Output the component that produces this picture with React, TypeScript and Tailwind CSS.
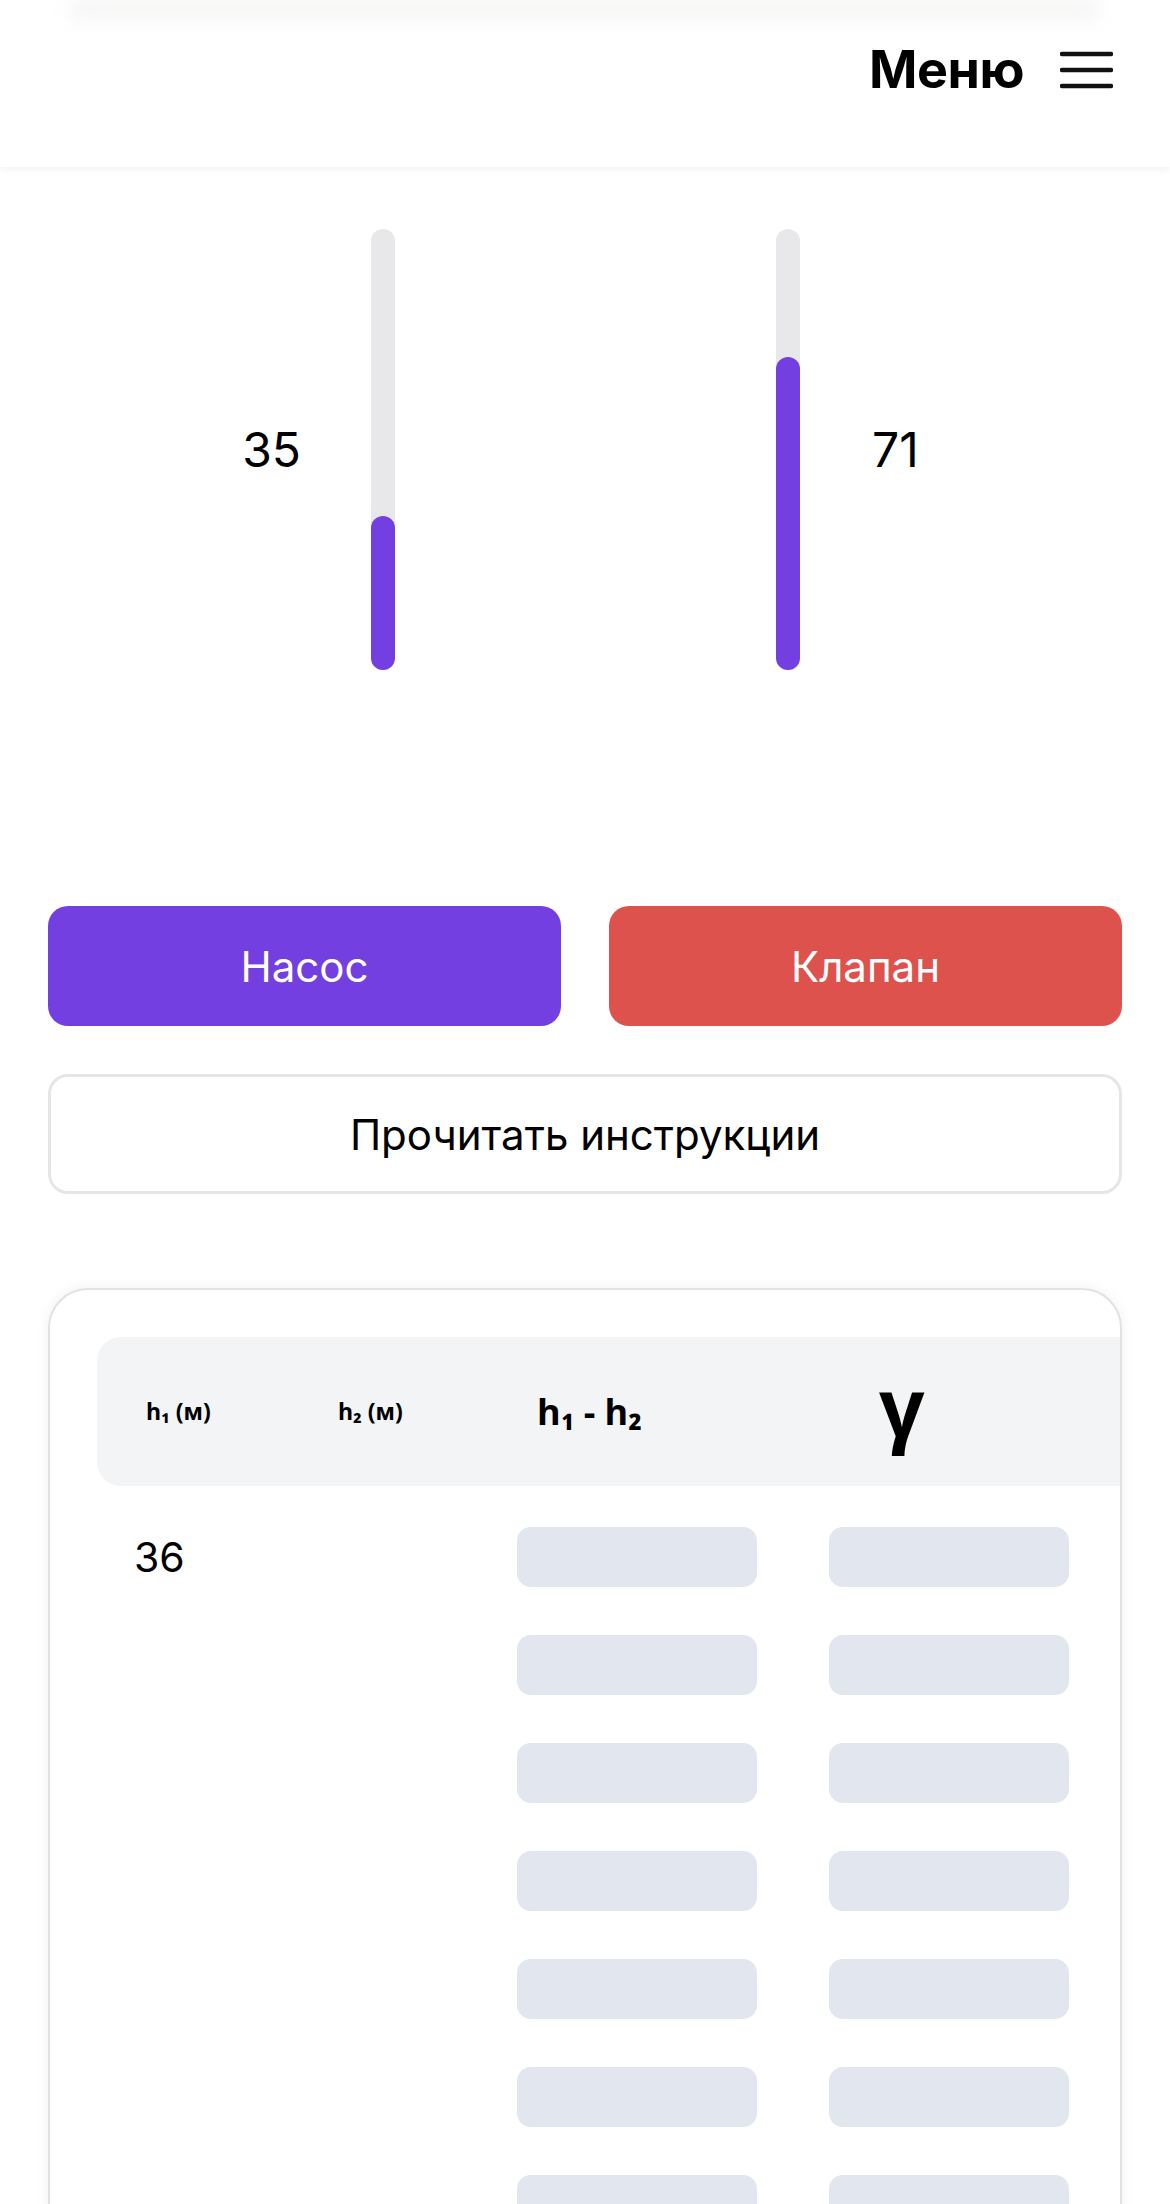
import React from "react";

const rows = Array.from({ length: 9 }, (_, i) => i);

function Track({ value }: { value: number }) {
  return (
    <div className="relative flex h-[441px] w-[24px] flex-col justify-end rounded-full bg-[#e8e8ea]">
      <div className="w-full rounded-full bg-[#743fe0]" style={{ height: `${value}%` }} />
    </div>
  );
}

export default function App() {
  return (
    <div className="min-h-[2204px] overflow-hidden bg-white font-['Inter',sans-serif] text-black">
      <header className="relative h-[167px] bg-white shadow-[0_3px_8px_rgba(0,0,0,0.05)]">
        <div className="mx-[70px] h-[26px] bg-linear-to-b from-[#f1efee] to-white blur-[10px]" />
        <div className="-mt-[26px] flex h-[140px] items-center justify-end pr-[57px]">
          <span className="text-[52px] leading-none font-bold tracking-[-0.5px]">Меню</span>
          <svg width="53" height="38" viewBox="0 0 53 38" className="ml-[36px]">
            <path d="M2 3 H51 M2 19 H51 M2 35 H51" stroke="#111" strokeWidth="4.5" strokeLinecap="round" />
          </svg>
        </div>
      </header>

      <section className="mt-[62px] grid grid-cols-2">
        <div className="flex items-center justify-end gap-[70px] pr-[190px]">
          <span className="text-[48px] leading-none">35</span>
          <Track value={35} />
        </div>
        <div className="flex items-center gap-[72px] pl-[191px]">
          <Track value={71} />
          <span className="text-[48px] leading-none">71</span>
        </div>
      </section>

      <section className="mt-[236px] px-[48px]">
        <div className="grid grid-cols-2 gap-[48px]">
          <button className="h-[120px] rounded-[20px] bg-[#743fe0] text-[42px] text-white">Насос</button>
          <button className="h-[120px] rounded-[20px] bg-[#dd524d] text-[42px] text-white">Клапан</button>
        </div>
        <button className="mt-[48px] h-[120px] w-full rounded-[20px] border-[3px] border-[#e6e6e8] bg-white text-[42px]">
          Прочитать инструкции
        </button>
      </section>

      <section className="mt-[94px] px-[48px]">
        <div className="overflow-hidden rounded-[40px] border-2 border-[#e2e2e4] bg-white pt-[47px] pb-[48px] pl-[47px] shadow-[0_0_14px_rgba(0,0,0,0.06)]">
          <div className="w-[1320px]">
            <div className="grid h-[149px] grid-cols-[192px_192px_312px_312px_312px] items-center rounded-l-[24px] bg-[#f3f4f6] font-['Open_Sans',sans-serif] font-bold">
              <div className="pl-[49px] text-[23px]">h₁ (м)</div>
              <div className="pl-[49px] text-[23px]">h₂ (м)</div>
              <div className="pl-[56px] text-[36px]">h₁ - h₂</div>
              <div className="pb-[12px] pl-[86px] text-[80px] leading-none">γ</div>
              <div />
            </div>
            <div className="flex flex-col gap-[48px] pt-[41px]">
              {rows.map((i) => (
                <div key={i} className="grid h-[60px] grid-cols-[192px_192px_312px_312px_312px] items-center">
                  <div className="pl-[37px] text-[41px] leading-none">{i === 0 ? "36" : ""}</div>
                  <div />
                  <div className="pl-[36px]">
                    <div className="h-[60px] w-[240px] rounded-[14px] bg-[#e2e7ef]" />
                  </div>
                  <div className="pl-[36px]">
                    <div className="h-[60px] w-[240px] rounded-[14px] bg-[#e2e7ef]" />
                  </div>
                  <div />
                </div>
              ))}
            </div>
          </div>
        </div>
      </section>
    </div>
  );
}
